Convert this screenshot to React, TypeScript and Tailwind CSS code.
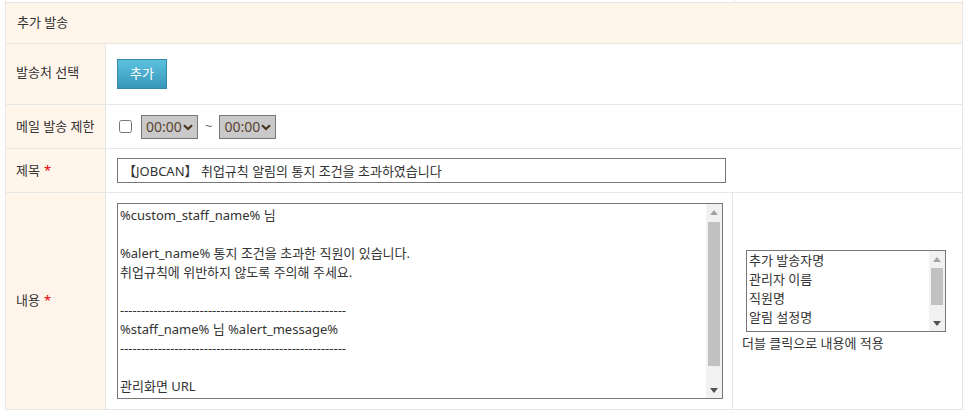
import React from "react";

const font = "font-['Noto_Sans','Noto_Sans_CJK_KR',sans-serif]";

const dashes = "-".repeat(54);

const bodyText = `%custom_staff_name% 님

%alert_name% 통지 조건을 초과한 직원이 있습니다.
취업규칙에 위반하지 않도록 주의해 주세요.

${dashes}
%staff_name% 님 %alert_message%
${dashes}

관리화면 URL
%url%`;

const Required = () => <span className="ml-1 text-[#e60000]">*</span>;

// classic (non-overlay) scrollbar look, scrolled to the top
const ScrollBar = ({ thumbTop, thumbHeight }: { thumbTop: number; thumbHeight: number }) => (
  <div className="relative flex w-[16px] shrink-0 flex-col bg-[#f1f1f1]">
    <div className="flex h-[16px] items-center justify-center">
      <svg width="8" height="5" viewBox="0 0 8 5">
        <path d="M0 5 L4 0 L8 5 Z" fill="#a3a3a3" />
      </svg>
    </div>
    <div className="flex-1" />
    <div className="flex h-[16px] items-center justify-center">
      <svg width="8" height="5" viewBox="0 0 8 5">
        <path d="M0 0 L8 0 L4 5 Z" fill="#505050" />
      </svg>
    </div>
    <div
      className="absolute left-[2px] right-[2px] bg-[#c1c1c1]"
      style={{ top: thumbTop, height: thumbHeight }}
    />
  </div>
);

const TimeSelect = () => (
  <div className="relative">
    <select
      defaultValue="00:00"
      className="h-[24px] w-[57px] appearance-none border border-[#777] bg-[#c9c9c9] pl-[4px] text-[14px] text-[#5a4430] outline-none"
    >
      <option>00:00</option>
      <option>00:30</option>
      <option>01:00</option>
    </select>
    <svg
      className="pointer-events-none absolute right-[5px] top-[9px]"
      width="10"
      height="7"
      viewBox="0 0 10 7"
    >
      <path d="M1 1.2 L5 5 L9 1.2" fill="none" stroke="#4a3520" strokeWidth="2.2" />
    </svg>
  </div>
);

const options = ["추가 발송자명", "관리자 이름", "직원명", "알림 설정명"];

export default function App() {
  return (
    <div className={`${font} bg-white text-[13px] text-[#333]`}>
      <div className="ml-[5px] w-[958px]">
        {/* tail of the previous row */}
        <div className="flex h-[3px] border-x border-b border-[#e6e6e6]">
          <div className="w-[729px] border-r border-[#e6e6e6]" />
        </div>

        <div className="flex h-[41px] items-center border-x border-b border-[#e6e6e6] bg-[#fff5eb] pl-[11px]">
          추가 발송
        </div>

        <div className="flex h-[61px] border-x border-b border-[#e6e6e6]">
          <div className="flex w-[100px] items-center border-r border-[#e6e6e6] bg-[#fff5eb] pl-[10px] pb-[2px]">
            발송처 선택
          </div>
          <div className="flex items-center pl-[11px]">
            <button
              type="button"
              className="h-[30px] w-[50px] border border-[#3688a8] bg-gradient-to-b from-[#5cc1df] to-[#3797bb] text-[13px] text-white"
            >
              추가
            </button>
          </div>
        </div>

        <div className="flex h-[44px] border-x border-b border-[#e6e6e6]">
          <div className="flex w-[100px] items-center border-r border-[#e6e6e6] bg-[#fff5eb] pl-[10px]">
            메일 발송 제한
          </div>
          <div className="flex items-center pl-[13px]">
            <input type="checkbox" className="mr-[9px] h-[13px] w-[13px]" />
            <TimeSelect />
            <span className="mx-[7px] text-[#666]">~</span>
            <TimeSelect />
          </div>
        </div>

        <div className="flex h-[44px] border-x border-b border-[#e6e6e6]">
          <div className="flex w-[100px] items-center border-r border-[#e6e6e6] bg-[#fff5eb] pl-[10px]">
            제목
            <Required />
          </div>
          <div className="flex items-center pl-[11px]">
            <input
              type="text"
              defaultValue="【JOBCAN】 취업규칙 알림의 통지 조건을 초과하였습니다"
              className="h-[25px] w-[609px] border border-[#777] px-[5px] text-[13px] text-[#333] outline-none"
            />
          </div>
        </div>

        <div className="flex h-[217px] border-x border-b border-[#e6e6e6]">
          <div className="flex w-[100px] items-center border-r border-[#e6e6e6] bg-[#fff5eb] pl-[10px]">
            내용
            <Required />
          </div>
          <div className="flex w-[627px] border-r border-[#e6e6e6] pl-[11px] pt-[10px]">
            <div className="flex h-[196px] w-[606px] border border-[#777]">
              <textarea
                defaultValue={bodyText}
                className="h-full flex-1 resize-none overflow-hidden px-[2px] py-[2px] text-[13px] leading-[19px] text-[#333] outline-none"
              />
              <ScrollBar thumbTop={18} thumbHeight={144} />
            </div>
          </div>
          <div className="flex flex-1 flex-col justify-center pl-[9px] pt-[2px]">
            <div className="ml-[4px] flex h-[82px] w-[200px] border border-[#777]">
              <div className="flex-1 pl-[2px] leading-[19px]">
                {options.map((o) => (
                  <div key={o}>{o}</div>
                ))}
              </div>
              <ScrollBar thumbTop={17} thumbHeight={37} />
            </div>
            <div className="mt-[2px]">더블 클릭으로 내용에 적용</div>
          </div>
        </div>
      </div>
    </div>
  );
}
